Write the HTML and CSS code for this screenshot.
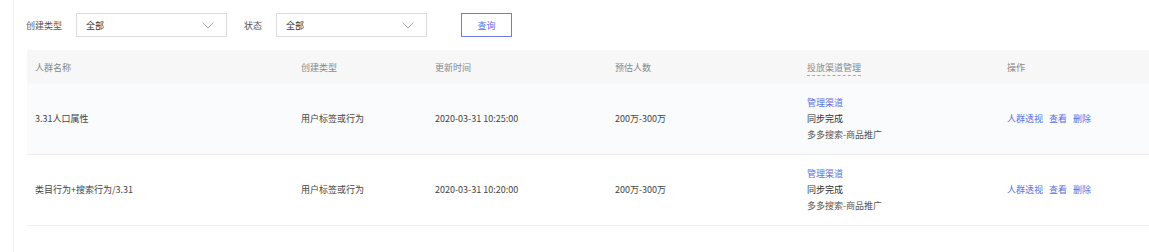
FILE: index.html
```html
<!DOCTYPE html>
<html lang="zh-CN">
<head>
<meta charset="utf-8">
<title>人群列表</title>
<link rel="stylesheet" href="styles.css">
</head>
<body>
<div class="page">
  <div class="filters">
    <span class="label">创建类型</span>
    <div class="select">
      <span>全部</span>
      <svg class="chev" width="12" height="7" viewBox="0 0 12 7"><path d="M0.5 0.7 L6 6 L11.5 0.7" fill="none" stroke="#a0a0a0" stroke-width="0.9"/></svg>
    </div>
    <span class="label label2">状态</span>
    <div class="select">
      <span>全部</span>
      <svg class="chev" width="12" height="7" viewBox="0 0 12 7"><path d="M0.5 0.7 L6 6 L11.5 0.7" fill="none" stroke="#a0a0a0" stroke-width="0.9"/></svg>
    </div>
    <button class="btn">查询</button>
  </div>

  <table class="grid">
    <colgroup>
      <col class="c1"><col class="c2"><col class="c3"><col class="c4"><col class="c5"><col class="c6">
    </colgroup>
    <thead>
      <tr>
        <th>人群名称</th>
        <th>创建类型</th>
        <th>更新时间</th>
        <th>预估人数</th>
        <th><span class="dotted">投放渠道管理</span></th>
        <th>操作</th>
      </tr>
    </thead>
    <tbody>
      <tr class="hover">
        <td>3.31人口属性</td>
        <td>用户标签或行为</td>
        <td>2020-03-31 10:25:00</td>
        <td>200万-300万</td>
        <td class="channel">
          <div class="link">管理渠道</div>
          <div class="dark">同步完成</div>
          <div class="muted">多多搜索-商品推广</div>
        </td>
        <td class="ops"><span class="link">人群透视</span><span class="link">查看</span><span class="link">删除</span></td>
      </tr>
      <tr>
        <td>类目行为+搜索行为/3.31</td>
        <td>用户标签或行为</td>
        <td>2020-03-31 10:20:00</td>
        <td>200万-300万</td>
        <td class="channel">
          <div class="link">管理渠道</div>
          <div class="dark">同步完成</div>
          <div class="muted">多多搜索-商品推广</div>
        </td>
        <td class="ops"><span class="link">人群透视</span><span class="link">查看</span><span class="link">删除</span></td>
      </tr>
    </tbody>
  </table>
</div>
</body>
</html>
```

FILE: styles.css
```css
html, body {
  margin: 0;
  padding: 0;
  background: #fff;
}
body {
  font-family: "Noto Sans CJK SC", "Noto Sans", sans-serif;
  font-size: 9px;
  color: #333;
}
.page {
  margin-left: 13px;
  border-left: 1px solid #efefef;
  min-height: 252px;
  box-sizing: border-box;
  padding-left: 12px;
  padding-top: 13px;
}
.filters {
  display: flex;
  align-items: center;
  height: 24px;
}
.label {
  color: #555;
  margin-right: 14px;
}
.label2 {
  margin-left: 17px;
}
.select {
  width: 151px;
  height: 24px;
  box-sizing: border-box;
  border: 1px solid #dcdcdc;
  display: flex;
  align-items: center;
  justify-content: space-between;
  padding: 0 12px 0 9px;
  color: #333;
}
.chev {
  display: block;
}
.btn {
  margin-left: 34px;
  width: 51px;
  height: 24px;
  box-sizing: border-box;
  border: 1px solid #6b7ce8;
  background: #fff;
  color: #5b6ee6;
  font-family: inherit;
  font-size: 9px;
  padding: 0;
}
.grid {
  margin-top: 13px;
  margin-left: 1px;
  width: 1123px;
  border-collapse: collapse;
  table-layout: fixed;
}
.c1 { width: 266px; }
.c2 { width: 134px; }
.c3 { width: 180px; }
.c4 { width: 192px; }
.c5 { width: 200px; }
.c6 { width: 151px; }
th {
  background: #f7f7f7;
  color: #888;
  font-weight: normal;
  text-align: left;
  height: 34px;
  padding: 0 8px;
}
.dotted {
  border-bottom: 1px dashed #aaa;
  padding-bottom: 1px;
}
td {
  padding: 0 8px;
  height: 70px;
  border-bottom: 1px solid #eeeeee;
  color: #444;
  line-height: 16px;
}
tr.hover td {
  background: #fafbfd;
}
.link {
  color: #5b6ee6;
}
.dark {
  color: #333;
}
.muted {
  color: #555;
}
.ops .link {
  margin-right: 6px;
}
```
